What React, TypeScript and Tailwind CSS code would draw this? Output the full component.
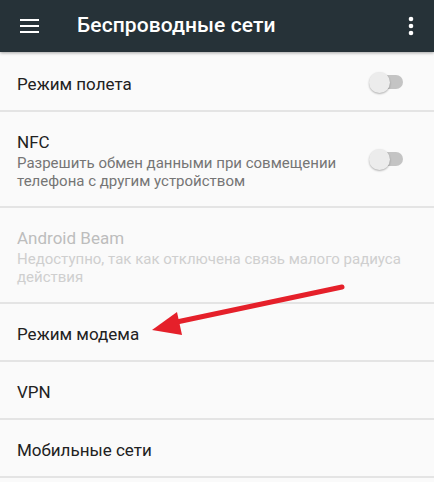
import { type ReactNode } from 'react'

function Toggle() {
  return (
    <div className="relative w-[36px] h-[22px] flex items-center shrink-0">
      <div className="absolute left-[10px] w-[24px] h-[14px] rounded-full bg-[#c4c4c4]" />
      <div className="absolute left-0 w-[21px] h-[21px] rounded-full bg-[#ececec] shadow-[0_1px_2px_rgba(0,0,0,0.3)]" />
    </div>
  )
}

function Row({
  title,
  summary,
  disabled = false,
  toggle = false,
  tall = false,
}: {
  title: ReactNode
  summary?: ReactNode
  disabled?: boolean
  toggle?: boolean
  tall?: boolean
}) {
  return (
    <div
      className={`flex items-center pl-[17px] pr-[29px] border-b-2 border-[#e4e4e4] ${
        tall ? 'h-[96px]' : 'h-[58px]'
      }`}
    >
      <div className="flex-1 min-w-0 pt-[3px]">
        <div className={`text-[17px] leading-[22px] ${disabled ? 'text-[#bdbdbd]' : 'text-[#212121]'}`}>
          {title}
        </div>
        {summary && (
          <div
            className={`text-[15px] leading-[18px] mt-[1px] ${
              disabled ? 'text-[#cfcfcf]' : 'text-[#757575]'
            }`}
          >
            {summary}
          </div>
        )}
      </div>
      {toggle && <Toggle />}
    </div>
  )
}

export default function App() {
  return (
    <div className="relative w-[434px] h-[482px] overflow-hidden bg-[#fafafa] font-['Roboto',sans-serif]">
      {/* 상단 툴바 */}
      <div className="h-[52px] bg-[#263238] flex items-center shadow-[0_1px_3px_rgba(0,0,0,0.35)] relative z-10">
        <div className="w-[77px] pl-[20px] flex items-center">
          <svg width="20" height="16" viewBox="0 0 20 16" aria-hidden="true">
            <rect x="0" y="1" width="19" height="2" fill="#fff" />
            <rect x="0" y="7" width="19" height="2" fill="#fff" />
            <rect x="0" y="13" width="19" height="2" fill="#fff" />
          </svg>
        </div>
        <div className="flex-1 text-white text-[21px] font-medium tracking-[0.1px]">Беспроводные сети</div>
        <div className="w-[46px] flex justify-center">
          <svg width="6" height="20" viewBox="0 0 6 20" aria-hidden="true">
            <circle cx="3" cy="3" r="2.3" fill="#fff" />
            <circle cx="3" cy="10" r="2.3" fill="#fff" />
            <circle cx="3" cy="17" r="2.3" fill="#fff" />
          </svg>
        </div>
      </div>

      {/* 설정 목록 */}
      <div className="pt-[2px]">
        <Row title="Режим полета" toggle />
        <Row
          tall
          toggle
          title="NFC"
          summary="Разрешить обмен данными при совмещении телефона с другим устройством"
        />
        <Row
          tall
          disabled
          title="Android Beam"
          summary="Недоступно, так как отключена связь малого радиуса действия"
        />
        <Row title="Режим модема" />
        <Row title="VPN" />
        <Row title="Мобильные сети" />
      </div>

      {/* 빨간 화살표 */}
      <svg
        className="absolute left-0 top-0 pointer-events-none"
        width="434"
        height="482"
        viewBox="0 0 434 482"
        aria-hidden="true"
      >
        <line x1="342" y1="287" x2="172" y2="323" stroke="#e5202a" strokeWidth="5" strokeLinecap="round" />
        <polygon points="152,330 177,312 182,335" fill="#e5202a" />
      </svg>
    </div>
  )
}
